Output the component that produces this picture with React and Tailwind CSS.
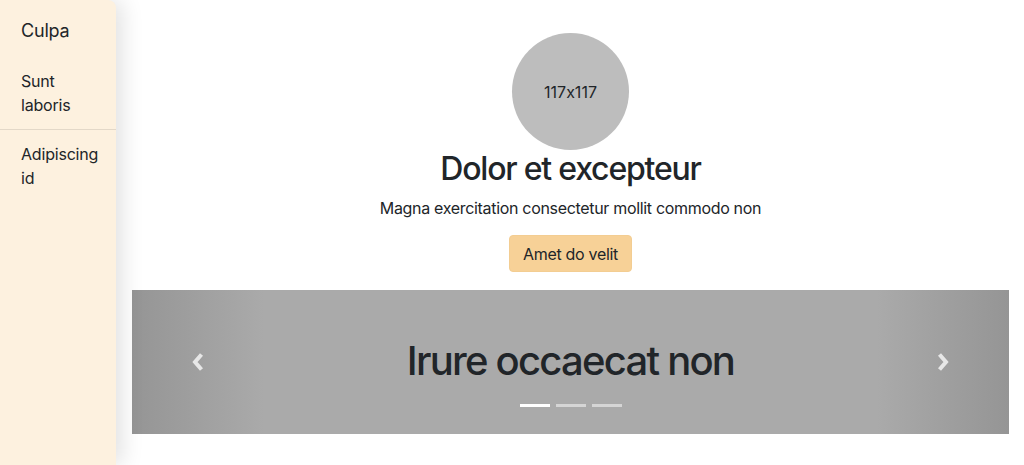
import React from "react";

const font = { fontFamily: "Inter, 'Noto Sans', sans-serif" };

const Chevron = ({ dir }) => (
  <svg width="14" height="20" viewBox="0 0 14 20" className="text-white/75">
    {dir === "left" ? (
      <path d="M10.5 2.5 L4 10 L10.5 17.5" fill="none" stroke="currentColor" strokeWidth="4" />
    ) : (
      <path d="M3.5 2.5 L10 10 L3.5 17.5" fill="none" stroke="currentColor" strokeWidth="4" />
    )}
  </svg>
);

const App = () => {
  return (
    <div
      className="flex h-[465px] w-[1024px] bg-white text-[#212529] overflow-hidden tracking-[-0.012em] [font-feature-settings:'calt'_0]"
      style={font}
    >
      {/* Sidebar */}
      <aside className="relative z-10 w-[116px] shrink-0 bg-[#fdf1df] rounded-tr-lg shadow-[6px_0_22px_rgba(0,0,0,0.12)]">
        <div className="px-[21px] pt-[17px] text-[18px] leading-[27px]">Culpa</div>
        <nav className="mt-[13px] flex flex-col text-[16px] leading-6">
          <a className="px-[21px] py-3 border-b border-[#e3d8c8]">Sunt laboris</a>
          <a className="px-[21px] py-3">Adipiscing id</a>
        </nav>
      </aside>

      {/* Main */}
      <main className="flex-1 pl-4 pr-[15px] pt-[33px]">
        <div className="flex flex-col items-center">
          <div className="w-[117px] h-[117px] rounded-full bg-[#bdbdbd] flex items-center justify-center text-[16px] tracking-normal">
            117x117
          </div>
          <h2 className="text-[32px] leading-[38px] font-[550] tracking-[-0.038em]">Dolor et excepteur</h2>
          <p className="mt-2 text-[16px] leading-6 tracking-[-0.02em]">Magna exercitation consectetur mollit commodo non</p>
          <button className="mt-[15px] h-[37px] px-[13px] rounded bg-[#f7d197] border border-[#f3cd92] text-[16px] tracking-[-0.02em]">
            Amet do velit
          </button>
        </div>

        {/* Carousel */}
        <div className="relative mt-[18px] h-[144px] bg-[#aaaaaa] flex flex-col items-center pt-[47px]">
          <div className="absolute left-0 top-0 bottom-0 w-[15%] bg-gradient-to-r from-[#959595] to-[#aaaaaa] flex items-center justify-center">
            <Chevron dir="left" />
          </div>
          <div className="absolute right-0 top-0 bottom-0 w-[15%] bg-gradient-to-l from-[#959595] to-[#aaaaaa] flex items-center justify-center">
            <Chevron dir="right" />
          </div>
          <h1 className="relative text-[40px] leading-[48px] font-[550] tracking-[-0.044em]">Irure occaecat non</h1>
          <div className="relative mt-[19px] flex gap-[6px]">
            <span className="block w-[30px] h-[3px] bg-white" />
            <span className="block w-[30px] h-[3px] bg-white/50" />
            <span className="block w-[30px] h-[3px] bg-white/50" />
          </div>
        </div>
      </main>
    </div>
  );
};

export default App;
